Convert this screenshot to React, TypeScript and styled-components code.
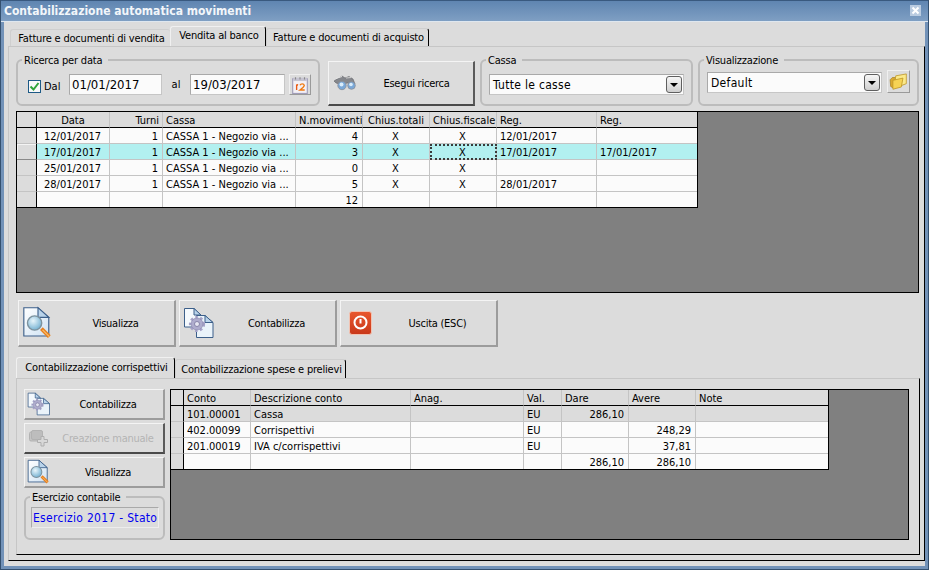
import React from "react";
import styled, {createGlobalStyle} from "styled-components";

const Global = createGlobalStyle`
  html, body {
    margin: 0;
    padding: 0;
    background: #dcdcdc;
  }
  * {
    box-sizing: border-box;
  }
`;

const Window = styled.div`
  width: 929px;
  height: 570px;
  display: flex;
  flex-direction: column;
  padding: 0 4px 4px;
  background: #7292b8;
  box-shadow: inset 1px 0 0 #34506f, inset -1px 0 0 #34506f, inset 0 -1px 0 #34506f;
  font-family: "DejaVu Sans Condensed", "DejaVu Sans", sans-serif;
  font-stretch: condensed;
  font-size: 11px;
  color: #000;
  overflow: hidden;
`;

const TitleBar = styled.div`
  flex: none;
  height: 22px;
  margin: 0 -3px;
  padding: 0 7px 1px 3px;
  display: flex;
  align-items: center;
  justify-content: space-between;
  background: linear-gradient(to bottom, #5f85b1, #7f9fc3);
  border-top: 1px solid #39597f;
  border-bottom: 1px solid #dfe7ef;
`;

const Title = styled.div`
  font-size: 12px;
  font-weight: 700;
  color: #f2f6fa;
`;

const Close = styled.div`
  width: 11px;
  height: 11px;
  background: #b9cbe0;
  display: flex;
  align-items: center;
  justify-content: center;
`;

const Content = styled.div`
  flex: 1;
  min-height: 0;
  display: flex;
  flex-direction: column;
  background: #dcdcdc;
  padding: 4px 0 5px 4px;
`;

const TabRow = styled.div<{$pad: number}>`
  flex: none;
  height: 20px;
  display: flex;
  align-items: flex-end;
  padding-left: ${(p) => p.$pad}px;
`;

const Tab = styled.div<{$w: number; $active?: boolean; $raise: number; $open?: boolean}>`
  width: ${(p) => p.$w}px;
  height: ${(p) => p.$raise}px;
  padding: 0 0 ${(p) => (p.$active ? 2 : 0)}px 2px;
  display: flex;
  align-items: center;
  justify-content: center;
  white-space: nowrap;
  letter-spacing: -0.2px;
  background: #dcdcdc;
  border-top: 1px solid ${(p) => (p.$active ? "#f0f0f0" : "#cfcfcf")};
  border-left: 1px solid ${(p) => (p.$active ? "#f0f0f0" : "#cfcfcf")};
  border-right: ${(p) => (p.$open ? "0" : "1px solid #000")};
  border-radius: 3px 3px 0 0;
`;

const Panel = styled.div`
  flex: 1;
  min-height: 0;
  display: flex;
  flex-direction: column;
  padding: 6px 4px 0 7px;
  border-top: 1px solid #c6c6c6;
  border-left: 1px solid #c6c6c6;
  border-right: 1px solid #000;
  border-bottom: 1px solid #000;
`;

const SearchRow = styled.div`
  flex: none;
  display: flex;
  align-items: flex-end;
  height: 53px;
`;

const Group = styled.fieldset<{$w: number; $h: number; $ml?: number}>`
  flex: none;
  width: ${(p) => p.$w}px;
  height: ${(p) => p.$h}px;
  margin: 0 0 0 ${(p) => p.$ml || 0}px;
  padding: 0 7px;
  min-width: 0;
  border: 2px solid #bcbcbc;
  border-radius: 6px;
`;

const Legend = styled.legend`
  margin-left: -3px;
  padding: 0 6px 0 2px;
  font-size: 11px;
  letter-spacing: -0.2px;
  line-height: 16px;
  height: 14px;
`;

const GroupRow = styled.div<{$top: number}>`
  display: flex;
  align-items: center;
  margin-top: ${(p) => p.$top}px;
`;

const CheckBox = styled.div`
  width: 13px;
  height: 13px;
  margin: 3px 0 0 3px;
  border: 1px solid #1d5a86;
  background: #f8f8f8;
  display: flex;
  align-items: center;
  justify-content: center;
`;

const CheckLabel = styled.span`
  margin: 3px 3px 0 3px;
  width: 22px;
`;

const DateLabel = styled.span<{$w: number}>`
  width: ${(p) => p.$w}px;
  text-align: center;
`;

const Field = styled.div<{$w: number}>`
  width: ${(p) => p.$w}px;
  height: 21px;
  padding: 0 0 1px 2px;
  display: flex;
  align-items: center;
  font-size: 13px;
  background: #fbfbfb;
  border: 1px solid #a9a9a9;
  border-right-color: #c6c6c6;
  border-bottom-color: #c6c6c6;
`;

const Select = styled(Field)`
  padding: 0 1px 0 3px;
  font-size: 12px;
  letter-spacing: 0.3px;
  justify-content: space-between;
`;

const Arrow = styled.div`
  width: 16px;
  height: 17px;
  flex: none;
  border: 1px solid #5f5f5f;
  border-radius: 3px;
  background: linear-gradient(to bottom, #f6f6f6, #cfcfcf);
  display: flex;
  align-items: center;
  justify-content: center;
  &::after {
    content: "";
    border-top: 4px solid #000;
    border-left: 4px solid transparent;
    border-right: 4px solid transparent;
  }
`;

const IconButton = styled.div<{$w: number; $h: number; $ml: number; $mt?: number}>`
  flex: none;
  width: ${(p) => p.$w}px;
  height: ${(p) => p.$h}px;
  margin-left: ${(p) => p.$ml}px;
  margin-top: ${(p) => p.$mt || 0}px;
  display: flex;
  align-items: center;
  justify-content: center;
  border: 1px solid;
  border-color: #f0f0f0 #9a9a9a #9a9a9a #f0f0f0;
`;

const Button = styled.div<{$w: number; $h: number; $icon: number; $dark?: boolean; $off?: boolean}>`
  flex: none;
  width: ${(p) => p.$w}px;
  height: ${(p) => p.$h}px;
  display: flex;
  align-items: center;
  background: #dcdcdc;
  border-style: solid;
  border-width: 1px 2px 2px 1px;
  border-color: #f4f4f4 ${(p) => (p.$dark ? "#5a5a5a" : "#9c9c9c")} ${(p) => (p.$dark ? "#4a4a4a" : "#9c9c9c")} #f4f4f4;
  color: ${(p) => (p.$off ? "#b4b4b4" : "#000")};
  & > span:first-child {
    width: ${(p) => p.$icon}px;
    flex: none;
    display: flex;
    align-items: center;
    justify-content: center;
  }
  & > span:last-child {
    flex: 1;
    text-align: center;
    white-space: nowrap;
    letter-spacing: -0.25px;
  }
`;

const SearchButton = styled(Button)`
  margin: 0 0 0 8px;
`;

const GridArea = styled.div<{$h: number; $w: number; $top?: number}>`
  flex: none;
  width: ${(p) => p.$w}px;
  height: ${(p) => p.$h}px;
  margin-top: ${(p) => p.$top || 0}px;
  background: #808080;
  border: 1px solid #000;
`;

const Table = styled.table<{$w: number}>`
  width: ${(p) => p.$w}px;
  table-layout: fixed;
  border-collapse: separate;
  border-spacing: 0;
  font-size: 11px;
  border-right: 1px solid #000;
  border-bottom: 1px solid #000;
  background: #fbfbfb;
`;

const Cell = styled.td<{$align?: string; $bg?: string; $focus?: boolean}>`
  height: 16px;
  padding: 3px 4px 0 3px;
  line-height: 12px;
  overflow: hidden;
  white-space: nowrap;
  text-align: ${(p) => p.$align || "left"};
  background: ${(p) => p.$bg || "transparent"};
  border-right: 1px solid #c4c4c4;
  border-bottom: 1px solid #c4c4c4;
  ${(p) => (p.$focus ? "outline: 2px dotted #3a3a3a; outline-offset: -2px;" : "")}
  tr:last-child > & {
    border-bottom: 0;
    height: 15px;
  }
  &:last-child {
    border-right: 0;
  }
`;

const Head = styled.th<{$align?: string}>`
  height: 16px;
  padding: 3px 3px 0;
  font-weight: 400;
  line-height: 12px;
  white-space: nowrap;
  overflow: hidden;
  text-align: ${(p) => p.$align || "left"};
  background: #dcdcdc;
  border-right: 1px solid #c4c4c4;
  border-bottom: 1px solid #000;
  &:first-child {
    border-right-color: #000;
  }
  &:last-child {
    border-right: 0;
  }
`;

const Indicator = styled.td<{$raised?: boolean}>`
  height: 16px;
  padding: 0;
  background: #dcdcdc;
  border-right: 1px solid #000;
  border-bottom: 1px solid ${(p) => (p.$raised ? "#8a8a8a" : "#c4c4c4")};
  box-shadow: ${(p) => (p.$raised ? "inset 1px 1px 0 #f4f4f4" : "none")};
  tr:last-child > & {
    border-bottom: 0;
    height: 15px;
  }
`;

const ButtonRow = styled.div`
  flex: none;
  display: flex;
  gap: 3px;
  margin: 7px 0 0 2px;
`;

const SubTabs = styled.div`
  flex: none;
  margin-top: 11px;
`;

const SubPanel = styled.div`
  flex: none;
  width: 904px;
  height: 177px;
  display: flex;
  gap: 5px;
  padding: 10px 0 0 7px;
  border-top: 1px solid #c6c6c6;
  border-left: 1px solid #c6c6c6;
  border-right: 1px solid #000;
  border-bottom: 1px solid #000;
`;

const SideColumn = styled.div`
  flex: none;
  width: 141px;
  display: flex;
  flex-direction: column;
  gap: 3px;
`;

const YearGroup = styled(Group)`
  margin-top: -1px;
`;

const YearField = styled.div`
  width: 128px;
  height: 21px;
  margin: 3px 0 0 -2px;
  padding-left: 1px;
  display: flex;
  align-items: center;
  overflow: hidden;
  white-space: nowrap;
  color: #0000ee;
  font-size: 12px;
  letter-spacing: 0.3px;
  background: #dcdcdc;
  border: 1px solid #a9a9a9;
  border-right-color: #ededed;
  border-bottom-color: #ededed;
`;

/* disegni */

const DocLens = ({s = 34}: {s?: number}) => (
  <svg width={s} height={s} viewBox="0 0 30 30">
    <defs>
      <linearGradient id="pg" x1="0" y1="0" x2="1" y2="1">
        <stop offset="0" stopColor="#ffffff"/>
        <stop offset="1" stopColor="#cfe2f3"/>
      </linearGradient>
      <radialGradient id="lg" cx="0.4" cy="0.35" r="0.7">
        <stop offset="0" stopColor="#e8f5fb"/>
        <stop offset="1" stopColor="#6faed0"/>
      </radialGradient>
    </defs>
    <path d="M2.5 1.5H15L24.5 10V26.5H2.5Z" fill="url(#pg)" stroke="#3c5f8a"/>
    <path d="M15 1.5V10H24.5Z" fill="#b9d3ea" stroke="#3c5f8a"/>
    <path d="M18 20L25 27" stroke="#e8801e" strokeWidth="3.4"/>
    <path d="M19 21L25 27" stroke="#f8c070" strokeWidth="1"/>
    <circle cx="12" cy="15" r="6.3" fill="url(#lg)" stroke="#7d929e" strokeWidth="1.2"/>
  </svg>
);

const DocGear = ({s = 32}: {s?: number}) => (
  <svg width={s} height={s} viewBox="0 0 32 32">
    <path d="M1.5 1.5H11L18 8V20H1.5Z" fill="#f4f9fd" stroke="#3c5f8a"/>
    <path d="M11 1.5V8H18Z" fill="#b9d3ea" stroke="#3c5f8a"/>
    <path d="M13.5 8.5H22L30 15.5V30.5H13.5Z" fill="#eaf3fa" stroke="#3c5f8a"/>
    <path d="M22 8.5V15.5H30Z" fill="#b9d3ea" stroke="#3c5f8a"/>
    <circle cx="14" cy="17" r="6.5" fill="none" stroke="#a6a3c8" strokeWidth="3.2" strokeDasharray="2.4 2.3"/>
    <circle cx="14" cy="17" r="6" fill="#aeaccd" stroke="#8583ab" strokeWidth="0.6"/>
    <circle cx="14" cy="17" r="2.5" fill="#e6e6f2" stroke="#77759c" strokeWidth="0.8"/>
  </svg>
);

const PowerIcon = () => (
  <svg width="23" height="24" viewBox="0 0 23 24">
    <defs>
      <linearGradient id="rd" x1="0" y1="0" x2="0" y2="1">
        <stop offset="0" stopColor="#e9572d"/>
        <stop offset="1" stopColor="#c8381a"/>
      </linearGradient>
    </defs>
    <rect x="0.5" y="0.5" width="22" height="23" rx="2.5" fill="url(#rd)" stroke="#f2c3b2"/>
    <circle cx="11.5" cy="11.5" r="6" fill="none" stroke="#fff" strokeWidth="2"/>
    <path d="M11.5 8V12.5" stroke="#fff" strokeWidth="2"/>
  </svg>
);

const Binoculars = () => (
  <svg width="24" height="16" viewBox="0 0 24 16">
    <path d="M1 6L9 1L12 3L16 1.5L20 4L22 9L14 8L10 10L3 8Z" fill="#85878c" stroke="#5f6166" strokeWidth="0.6"/>
    <path d="M3 3.5L9 1.5" stroke="#e6e6e6"/>
    <path d="M13 3L18 2.5" stroke="#d0d0d0"/>
    <circle cx="9" cy="10.5" r="4.2" fill="#7aa8d8" stroke="#8a8e96" strokeWidth="0.8"/>
    <circle cx="8.5" cy="9.5" r="2" fill="#d9ecfa"/>
    <circle cx="18.5" cy="10.5" r="3.8" fill="#7aa8d8" stroke="#8a8e96" strokeWidth="0.8"/>
    <circle cx="18" cy="9.5" r="1.8" fill="#d9ecfa"/>
  </svg>
);

const CalendarIcon = () => (
  <svg width="18" height="18" viewBox="0 0 16 16">
    <rect x="1.5" y="2.5" width="13" height="13" fill="#f3f0f6" stroke="#a09db8"/>
    <rect x="2" y="1.5" width="12" height="3" fill="#c6c4d2"/>
    <path d="M4 1V3M8 1V3M12 1V3" stroke="#8a8a8a"/>
    <path d="M5 7.6V12.5M6.3 8L5 7.6" stroke="#ea5a14" strokeWidth="1.2" fill="none"/>
    <path d="M8 8.2Q8.5 7 10 7T11.8 8.4Q11.6 9.8 8 12.4H12.2" stroke="#f07a12" strokeWidth="1.2" fill="none"/>
  </svg>
);

const FolderIcon = () => (
  <svg width="19" height="18" viewBox="0 0 17 16">
    <path d="M1 6L3 4H6L4 13.5L1.5 12Z" fill="#d9a92f" stroke="#a27d1c" strokeWidth="0.6"/>
    <path d="M6 2.5L15.5 0.8V9.5L5 13.5Z" fill="#fbe98a" stroke="#bd9527" strokeWidth="0.7"/>
    <path d="M3.5 6.5L12.5 4.5L11 12.5L3.5 14.5Z" fill="#f6d354" stroke="#bd9527" strokeWidth="0.7"/>
  </svg>
);

const AddIcon = () => (
  <svg width="20" height="17" viewBox="0 0 20 17">
    <rect x="0.5" y="2" width="11" height="9" rx="1.5" fill="#c4c4c4" stroke="#b2b2b2"/>
    <rect x="2.5" y="0.5" width="11" height="9" rx="1.5" fill="#bdbdbd" stroke="#b2b2b2"/>
    <path d="M12 6.5H15V9.5H18.5V12.5H15V16H12V12.5H8.5V9.5H12Z" fill="#d8d8d8" stroke="#aeaeae"/>
  </svg>
);

const mainCols = [20, 73, 53, 133, 67, 67, 67, 100, 100];
const subCols = [13, 67, 160, 113, 38, 67, 67, 132];

const mainHead: [string, string?][] = [
  ["Data", "center"],
  ["Turni", "right"],
  ["Cassa"],
  ["N.movimenti", "right"],
  ["Chius.totali", "center"],
  ["Chius.fiscale", "center"],
  ["Reg."],
  ["Reg."],
];

const CASSA = "CASSA 1 - Negozio via ...";

const mainRows = [
  ["12/01/2017", "1", CASSA, "4", "X", "X", "12/01/2017", ""],
  ["17/01/2017", "1", CASSA, "3", "X", "X", "17/01/2017", "17/01/2017"],
  ["25/01/2017", "1", CASSA, "0", "X", "X", "", ""],
  ["28/01/2017", "1", CASSA, "5", "X", "X", "28/01/2017", ""],
  ["", "", "", "12", "", "", "", ""],
];

const subHead = ["Conto", "Descrizione conto", "Anag.", "Val.", "Dare", "Avere", "Note"];
const subAlign = ["left", "left", "left", "left", "right", "right", "left"];

const subRows = [
  ["101.00001", "Cassa", "", "EU", "286,10", "", ""],
  ["402.00099", "Corrispettivi", "", "EU", "", "248,29", ""],
  ["201.00019", "IVA c/corrispettivi", "", "EU", "", "37,81", ""],
  ["", "", "", "", "286,10", "286,10", ""],
];

const sum = (list: number[]) => list.reduce((a, b) => a + b, 0);

const Cols = ({list}: {list: number[]}) => (
  <colgroup>
    {list.map((w, i) => (
      <col key={i} style={{width: w}}/>
    ))}
  </colgroup>
);

const App: React.FC = () => {
  return (
    <Window>
      <Global/>
      <TitleBar>
        <Title>Contabilizzazione automatica movimenti</Title>
        <Close>
          <svg width="9" height="9" viewBox="0 0 9 9">
            <path d="M1.5 1.5L7.5 7.5M7.5 1.5L1.5 7.5" stroke="#fff" strokeWidth="2"/>
          </svg>
        </Close>
      </TitleBar>
      <Content>
        <TabRow $pad={2}>
          <Tab $w={160} $raise={17} $open>Fatture e documenti di vendita</Tab>
          <Tab $w={96} $raise={20} $active>Vendita al banco</Tab>
          <Tab $w={163} $raise={18}>Fatture e documenti di acquisto</Tab>
        </TabRow>
        <Panel>
          <SearchRow>
            <Group $w={304} $h={53}>
              <Legend>Ricerca per data</Legend>
              <GroupRow $top={7}>
                <CheckBox>
                  <svg width="11" height="11" viewBox="0 0 11 11">
                    <path d="M1.5 5.5L4.5 8.5L9.5 2" fill="none" stroke="#2fa33a" strokeWidth="2"/>
                  </svg>
                </CheckBox>
                <CheckLabel>Dal</CheckLabel>
                <Field $w={93}>01/01/2017</Field>
                <DateLabel $w={28}>al</DateLabel>
                <Field $w={95}>19/03/2017</Field>
                <IconButton $w={22} $h={21} $ml={4}>
                  <CalendarIcon/>
                </IconButton>
              </GroupRow>
            </Group>
            <SearchButton $w={147} $h={45} $icon={31} $dark>
              <span><Binoculars/></span>
              <span>Esegui ricerca</span>
            </SearchButton>
            <Group $w={213} $h={53} $ml={5}>
              <Legend>Cassa</Legend>
              <GroupRow $top={7}>
                <Select $w={197}>
                  Tutte le casse
                  <Arrow/>
                </Select>
              </GroupRow>
            </Group>
            <Group $w={221} $h={53} $ml={5}>
              <Legend>Visualizzazione</Legend>
              <GroupRow $top={5}>
                <Select $w={177}>
                  Default
                  <Arrow/>
                </Select>
                <IconButton $w={23} $h={23} $ml={5} $mt={-2}>
                  <FolderIcon/>
                </IconButton>
              </GroupRow>
            </Group>
          </SearchRow>
          <GridArea $h={182} $w={903} $top={5}>
            <Table $w={sum(mainCols)}>
              <Cols list={mainCols}/>
              <thead>
                <tr>
                  <Head/>
                  {mainHead.map(([text, align], i) => (
                    <Head key={i} $align={align}>{text}</Head>
                  ))}
                </tr>
              </thead>
              <tbody>
                {mainRows.map((row, r) => (
                  <tr key={r}>
                    <Indicator $raised={r === 1}/>
                    {row.map((text, c) => (
                      <Cell
                        key={c}
                        $align={mainHead[c][1]}
                        $bg={r === 1 ? "#b2f0f0" : undefined}
                        $focus={r === 1 && c === 5}
                      >
                        {text}
                      </Cell>
                    ))}
                  </tr>
                ))}
              </tbody>
            </Table>
          </GridArea>
          <ButtonRow>
            <Button $w={158} $h={47} $icon={38}>
              <span><DocLens/></span>
              <span>Visualizza</span>
            </Button>
            <Button $w={158} $h={47} $icon={38}>
              <span><DocGear/></span>
              <span>Contabilizza</span>
            </Button>
            <Button $w={158} $h={47} $icon={38}>
              <span><PowerIcon/></span>
              <span>Uscita (ESC)</span>
            </Button>
          </ButtonRow>
          <SubTabs>
            <TabRow $pad={0}>
              <Tab $w={159} $raise={21} $active>Contabilizzazione corrispettivi</Tab>
              <Tab $w={171} $raise={19}>Contabilizzazione spese e prelievi</Tab>
            </TabRow>
          </SubTabs>
          <SubPanel>
            <SideColumn>
              <Button $w={141} $h={31} $icon={28}>
                <span><DocGear s={24}/></span>
                <span>Contabilizza</span>
              </Button>
              <Button $w={141} $h={31} $icon={28} $dark $off>
                <span><AddIcon/></span>
                <span>Creazione manuale</span>
              </Button>
              <Button $w={141} $h={31} $icon={28}>
                <span><DocLens s={26}/></span>
                <span>Visualizza</span>
              </Button>
              <YearGroup $w={141} $h={50}>
                <Legend>Esercizio contabile</Legend>
                <YearField>Esercizio 2017 - Stato</YearField>
              </YearGroup>
            </SideColumn>
            <GridArea $h={151} $w={739}>
              <Table $w={sum(subCols)}>
                <Cols list={subCols}/>
                <thead>
                  <tr>
                    <Head/>
                    {subHead.map((text) => (
                      <Head key={text}>{text}</Head>
                    ))}
                  </tr>
                </thead>
                <tbody>
                  {subRows.map((row, r) => (
                    <tr key={r}>
                      <Indicator/>
                      {row.map((text, c) => (
                        <Cell key={c} $align={subAlign[c]} $bg={r === 0 ? "#dcdcdc" : undefined}>
                          {text}
                        </Cell>
                      ))}
                    </tr>
                  ))}
                </tbody>
              </Table>
            </GridArea>
          </SubPanel>
        </Panel>
      </Content>
    </Window>
  );
};

export default App;
